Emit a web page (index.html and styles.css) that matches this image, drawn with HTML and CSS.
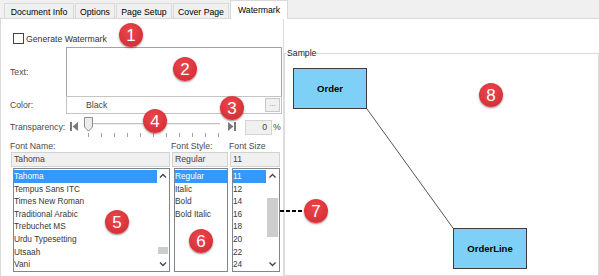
FILE: index.html
```html
<!DOCTYPE html>
<html lang="en">
<head>
  <meta charset="UTF-8">
  <title>Watermark</title>
  <link rel="stylesheet" href="styles.css">
</head>
<body>
<div class="window">
  <div class="tabbar">
    <div class="tab tab-docinfo">Document Info</div>
    <div class="tab tab-options">Options</div>
    <div class="tab tab-setup">Page Setup</div>
    <div class="tab tab-cover">Cover Page</div>
    <div class="tab tab-watermark active">Watermark</div>
  </div>

  <div class="content">
    <div class="left-panel">
      <div class="check-row">
        <span class="checkbox"></span>
        <span>Generate Watermark</span>
      </div>

      <div class="form-row text-row">
        <span class="label">Text:</span>
        <div class="text-field"></div>
      </div>

      <div class="form-row color-row">
        <span class="label">Color:</span>
        <div class="color-field">
          <span class="color-name">Black</span>
          <span class="dots-btn">...</span>
        </div>
      </div>

      <div class="form-row transp-row">
        <span class="label transp-label">Transparency:</span>
        <svg class="skip-icon" width="8" height="9" viewBox="0 0 8 9">
          <rect x="0" y="0" width="2" height="9" fill="#7a7a7a"/>
          <polygon points="8,0 8,9 2.5,4.5" fill="#7a7a7a"/>
        </svg>
        <div class="slider">
          <div class="track"></div>
          <svg class="thumb" width="9" height="15" viewBox="0 0 9 15">
            <path d="M0.5,0.5 H8.5 V10 L4.5,14.2 L0.5,10 Z" fill="#ececec" stroke="#8c8c8c"/>
          </svg>
          <div class="ticks">
            <span></span><span></span><span></span><span></span><span></span><span></span>
            <span></span><span></span><span></span><span></span><span></span>
          </div>
        </div>
        <svg class="skip-icon skip-end" width="9" height="9" viewBox="0 0 9 9">
          <polygon points="0,0 0,9 5.5,4.5" fill="#7a7a7a"/>
          <rect x="6" y="0" width="2" height="9" fill="#7a7a7a"/>
        </svg>
        <div class="pct-box">0</div>
        <span class="pct-sign">%</span>
      </div>

      <div class="font-grid">
        <span class="font-label">Font Name:</span>
        <span class="font-label">Font Style:</span>
        <span class="font-label">Font Size</span>

        <div class="font-input">Tahoma</div>
        <div class="font-input">Regular</div>
        <div class="font-input">11</div>

        <div class="list list-name">
          <div class="list-items">
            <div class="item selected">Tahoma</div>
            <div class="item">Tempus Sans ITC</div>
            <div class="item">Times New Roman</div>
            <div class="item">Traditional Arabic</div>
            <div class="item">Trebuchet MS</div>
            <div class="item">Urdu Typesetting</div>
            <div class="item">Utsaah</div>
            <div class="item">Vani</div>
          </div>
          <div class="scrollbar">
            <svg class="arrow" width="12" height="14" viewBox="0 0 12 14"><polyline points="3,8.5 6,5.5 9,8.5" fill="none" stroke="#444" stroke-width="1.3"/></svg>
            <div class="sb-track"><div class="sb-thumb thumb-name"></div></div>
            <svg class="arrow" width="12" height="14" viewBox="0 0 12 14"><polyline points="3,5.5 6,8.5 9,5.5" fill="none" stroke="#444" stroke-width="1.3"/></svg>
          </div>
        </div>

        <div class="list list-style">
          <div class="list-items">
            <div class="item selected">Regular</div>
            <div class="item">Italic</div>
            <div class="item">Bold</div>
            <div class="item">Bold Italic</div>
          </div>
        </div>

        <div class="list list-size">
          <div class="list-items">
            <div class="item selected">11</div>
            <div class="item">12</div>
            <div class="item">14</div>
            <div class="item">16</div>
            <div class="item">18</div>
            <div class="item">20</div>
            <div class="item">22</div>
            <div class="item">24</div>
          </div>
          <div class="scrollbar wide">
            <svg class="arrow" width="13" height="14" viewBox="0 0 13 14"><polyline points="3.5,8.5 6.5,5.5 9.5,8.5" fill="none" stroke="#444" stroke-width="1.3"/></svg>
            <div class="sb-track"><div class="sb-thumb thumb-size"></div></div>
            <svg class="arrow" width="13" height="14" viewBox="0 0 13 14"><polyline points="3.5,5.5 6.5,8.5 9.5,5.5" fill="none" stroke="#444" stroke-width="1.3"/></svg>
          </div>
        </div>
      </div>
    </div>

    <div class="right-panel">
      <fieldset class="sample">
        <legend>Sample</legend>
        <div class="canvas">
          <svg class="connector" width="313" height="217">
            <line x1="82" y1="51" x2="168" y2="170" stroke="#555" stroke-width="1"/>
          </svg>
          <div class="node node-order">Order</div>
          <div class="node node-orderline">OrderLine</div>
        </div>
      </fieldset>
    </div>
  </div>

  <div class="dash-line"></div>
  <div class="badge badge-1">1</div>
  <div class="badge badge-2">2</div>
  <div class="badge badge-3">3</div>
  <div class="badge badge-4">4</div>
  <div class="badge badge-5">5</div>
  <div class="badge badge-6">6</div>
  <div class="badge badge-7">7</div>
  <div class="badge badge-8">8</div>
</div>
</body>
</html>
```

FILE: styles.css
```css
body {
  margin: 0;
  font-family: "Liberation Sans", Arial, sans-serif;
  font-size: 8.7px;
  color: #000;
  background: #fff;
}

.window {
  position: relative;
  width: 599px;
  height: 276px;
  overflow: hidden;
}

/* tab strip */
.tabbar {
  display: flex;
  align-items: flex-end;
  gap: 1px;
  height: 18px;
  padding-left: 4px;
  background: #f0f0f0;
  border-bottom: 1px solid #d9d9d9;
}

.tab {
  box-sizing: border-box;
  height: 15px;
  padding-top: 2px;
  line-height: 13px;
  text-align: center;
  border: 1px solid #d9d9d9;
  border-bottom: none;
  background: #f0f0f0;
}
.tab-docinfo { width: 70px; }
.tab-options { width: 40px; }
.tab-setup { width: 56px; }
.tab-cover { width: 56px; }
.tab-watermark { width: 58px; }

.tab.active {
  height: 19px;
  margin-bottom: -1px;
  padding-top: 2px;
  line-height: 14px;
  background: #fff;
}

.content {
  display: flex;
  height: 257px;
}

/* left form */
.left-panel {
  box-sizing: border-box;
  width: 284px;
  padding-left: 9px;
  border-left: 1px solid #d9d9d9;
  border-right: 1px solid #dedede;
  color: #4a4a4a;
}

.check-row {
  display: flex;
  align-items: center;
  height: 15px;
  margin-top: 12px;
  color: #333;
}
.checkbox {
  box-sizing: border-box;
  width: 11px;
  height: 11px;
  margin-left: 3px;
  margin-right: 2px;
  border: 1px solid #444;
  background: #fff;
}

.form-row {
  display: flex;
  align-items: center;
}
.label {
  width: 56px;
  flex-shrink: 0;
}

.text-row {
  margin-top: 1px;
}
.text-field {
  box-sizing: border-box;
  width: 216px;
  height: 50px;
  border: 1px solid #a3a3a3;
}

.color-row {
  margin-top: -1px;
}
.color-field {
  box-sizing: border-box;
  display: flex;
  align-items: center;
  justify-content: space-between;
  width: 216px;
  height: 18px;
  padding: 0 1px 0 19px;
  border: 1px solid #c4c4c4;
  color: #444;
}
.dots-btn {
  box-sizing: border-box;
  width: 15px;
  height: 14px;
  line-height: 10px;
  text-align: center;
  font-size: 8px;
  color: #888;
  background: #f0f0f0;
  border: 1px solid #c8c8c8;
}

.transp-row {
  height: 22px;
  margin-top: 2px;
}
.transp-label {
  width: 60px;
}
.skip-icon {
  display: block;
  margin-top: -1px;
}
.slider {
  position: relative;
  width: 140px;
  height: 22px;
  margin-left: 4px;
}
.track {
  position: absolute;
  left: 6px;
  right: 2px;
  top: 7px;
  height: 1px;
  background: #c4c4c4;
  border-bottom: 1px solid #ececec;
}
.thumb {
  position: absolute;
  left: 2px;
  top: 1px;
}
.ticks {
  position: absolute;
  left: 6px;
  top: 17px;
  display: flex;
  gap: 12px;
}
.ticks span {
  width: 1px;
  height: 4px;
  background: #a0a0a0;
}
.skip-end {
  margin-left: 6px;
}
.pct-box {
  box-sizing: border-box;
  width: 27px;
  height: 15px;
  margin-left: 8px;
  padding-right: 4px;
  line-height: 13px;
  text-align: right;
  color: #444;
  background: #f0f0f0;
  border: 1px solid #d4d4d4;
}
.pct-sign {
  margin-left: 1px;
  color: #444;
}

/* font pickers */
.font-grid {
  display: grid;
  grid-template-columns: 159px 56px 50px;
  grid-template-rows: 11px 15px 104px;
  column-gap: 2px;
  row-gap: 0;
  margin-top: 3px;
  margin-left: 1px;
}
.font-label {
  line-height: 11px;
  margin-left: -1px;
  color: #4a4a4a;
}
.font-input {
  box-sizing: border-box;
  height: 15px;
  padding-left: 2px;
  line-height: 13px;
  color: #444;
  background: #f0f0f0;
  border: 1px solid #d2d2d2;
}

.list {
  box-sizing: border-box;
  display: flex;
  height: 104px;
  margin-top: 1px;
  margin-left: 2px;
  border: 1px solid #7f858c;
  background: #fff;
  overflow: hidden;
}
.list-name { width: 157px; }
.list-style { width: 54px; }
.list-size { width: 48px; }

.list-items {
  flex: 1;
  padding-top: 1px;
  font-size: 8.3px;
  color: #383838;
}
.item {
  height: 12.6px;
  line-height: 12.6px;
  white-space: nowrap;
}
.item.selected {
  background: #3399ff;
  color: #fff;
}

.scrollbar {
  display: flex;
  flex-direction: column;
  width: 12px;
  background: #fff;
}
.scrollbar.wide {
  width: 13px;
}
.arrow {
  display: block;
  flex-shrink: 0;
}
.sb-track {
  flex: 1;
}
.sb-thumb {
  margin: 0 1px;
  background: #cdcdcd;
}
.thumb-name {
  margin-top: 64px;
  height: 7px;
}
.thumb-size {
  margin-top: 15px;
  height: 39px;
}

/* sample preview */
.right-panel {
  width: 315px;
  padding-top: 29px;
}
.sample {
  box-sizing: border-box;
  height: 228px;
  margin: 0;
  padding: 0;
  border: 1px solid #dadada;
}
.sample legend {
  margin-left: 2px;
  padding: 0;
  line-height: 10px;
  color: #222;
}
.canvas {
  position: relative;
  height: 217px;
}
.connector {
  position: absolute;
  left: 0;
  top: 0;
}
.node {
  position: absolute;
  box-sizing: border-box;
  width: 74px;
  height: 41px;
  display: flex;
  align-items: center;
  justify-content: center;
  font-size: 9.5px;
  font-weight: bold;
  background: #7fd0f6;
  border: 1.5px solid #3c3c3c;
}
.node-order {
  left: 8px;
  top: 10px;
}
.node-orderline {
  left: 168px;
  top: 170px;
}

/* callouts */
.dash-line {
  position: absolute;
  left: 280px;
  top: 210px;
  width: 26px;
  height: 2px;
  background: repeating-linear-gradient(90deg, #000 0 4px, transparent 4px 6px);
}

.badge {
  position: absolute;
  width: 24px;
  height: 24px;
  border-radius: 50%;
  display: flex;
  align-items: center;
  justify-content: center;
  font-size: 17px;
  line-height: 1;
  color: #fff;
  background: radial-gradient(circle at 45% 35%, #e9474d, #d1282f);
  box-shadow: 0 1px 2px rgba(0, 0, 0, 0.45);
}
.badge-1 { left: 119px; top: 23px; }
.badge-2 { left: 173px; top: 57px; }
.badge-3 { left: 220px; top: 96px; }
.badge-4 { left: 143px; top: 109px; }
.badge-5 { left: 105px; top: 210px; }
.badge-6 { left: 189px; top: 229px; }
.badge-7 { left: 304px; top: 199px; }
.badge-8 { left: 479px; top: 83px; }
```
